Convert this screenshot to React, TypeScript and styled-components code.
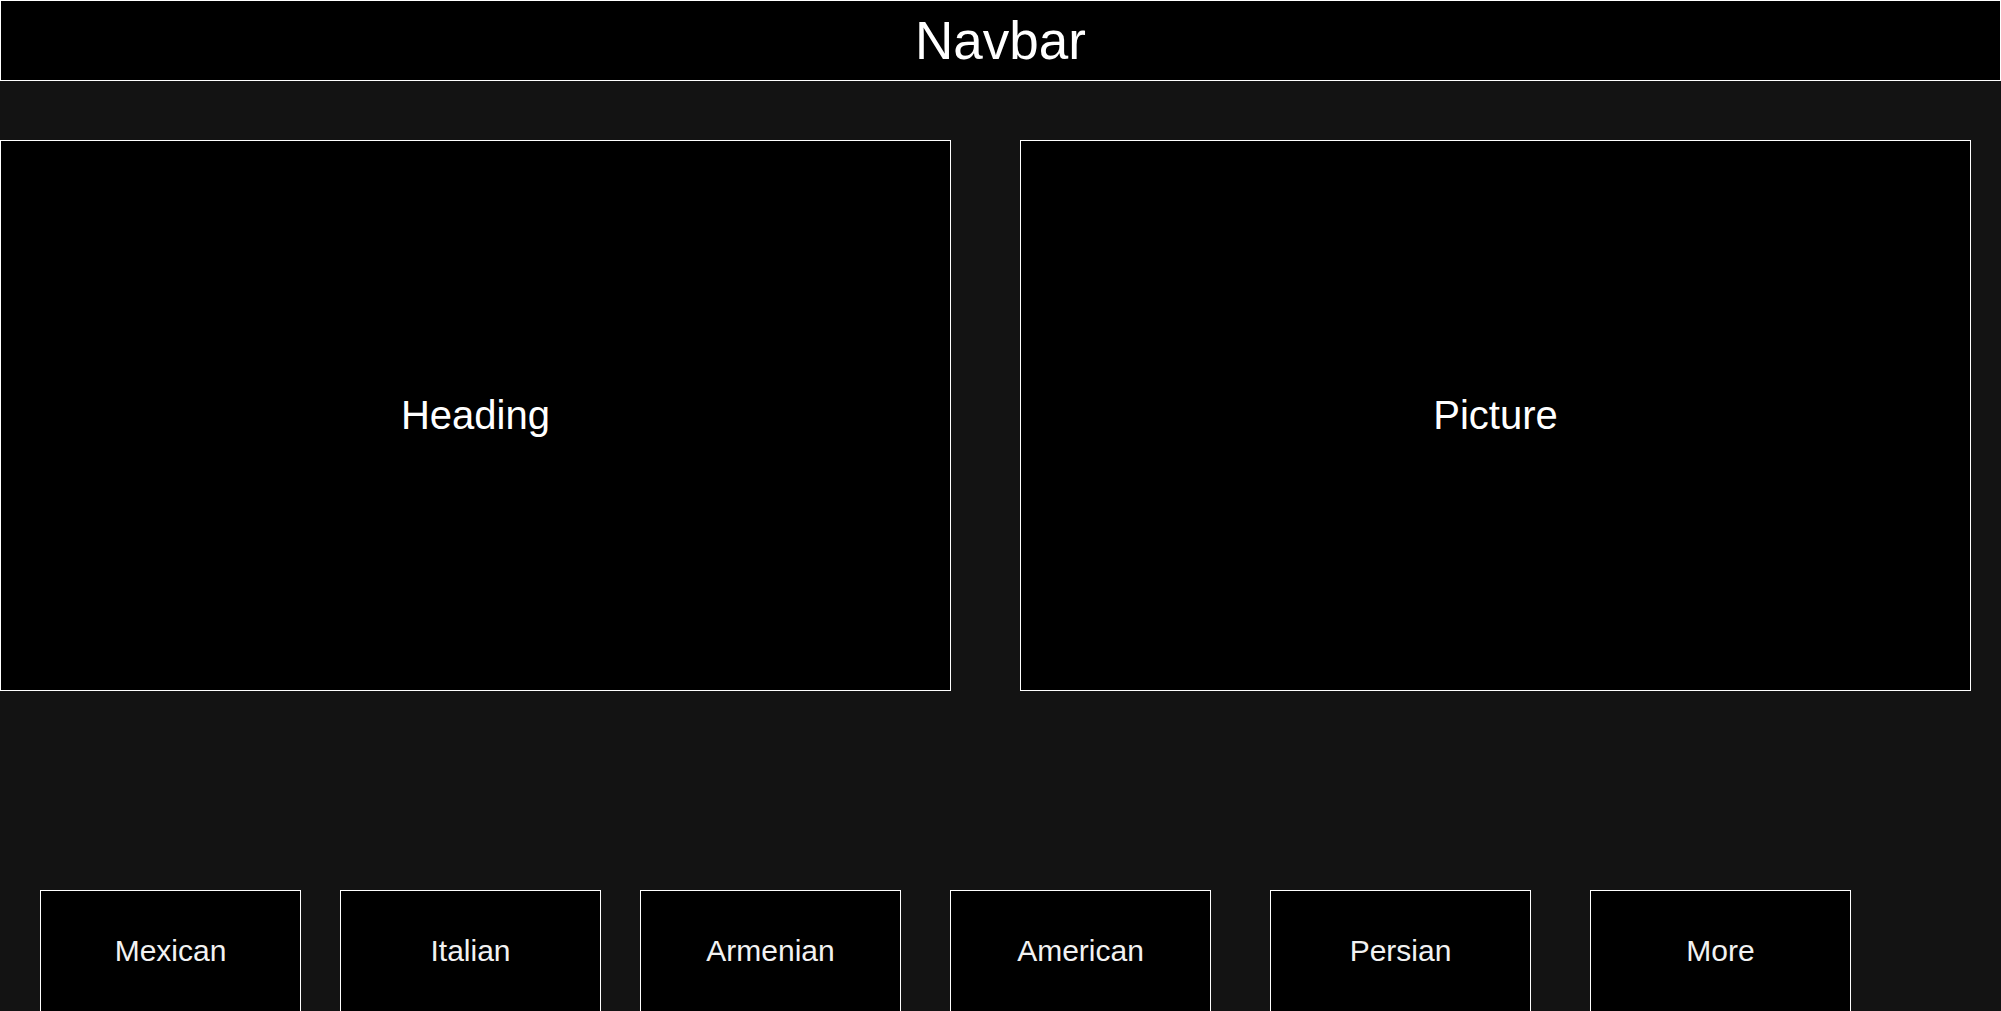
import React from "react";
import styled, { createGlobalStyle } from "styled-components";

const GlobalStyle = createGlobalStyle`
  html, body {
    margin: 0;
    padding: 0;
    background: #131313;
    overflow: hidden;
  }
  body {
    font-family: "Liberation Sans", Arial, sans-serif;
    color: #ffffff;
  }
  * { box-sizing: border-box; }
`;

const Page = styled.div`
  display: flex;
  flex-direction: column;
  width: 2001px;
`;

const Navbar = styled.header`
  height: 81px;
  border: 1px solid #ffffff;
  background: #000000;
  display: flex;
  align-items: center;
  justify-content: center;
  font-size: 53px;
`;

const HeroRow = styled.section`
  display: flex;
  gap: 69px;
  margin-top: 59px;
`;

const Panel = styled.div`
  width: 951px;
  height: 551px;
  border: 1px solid #ffffff;
  background: #000000;
  display: flex;
  align-items: center;
  justify-content: center;
  font-size: 40px;
`;

const CategoryRow = styled.nav`
  display: flex;
  margin-top: 199px;
  padding-left: 40px;
`;

const Category = styled.div<{ $offset: number }>`
  width: 261px;
  height: 122px;
  margin-left: ${(p) => p.$offset}px;
  border: 1px solid #ffffff;
  background: #000000;
  display: flex;
  align-items: center;
  justify-content: center;
  font-size: 30px;
  color: #f2f2f2;
`;

const categories: { name: string; offset: number }[] = [
  { name: "Mexican", offset: 0 },
  { name: "Italian", offset: 39 },
  { name: "Armenian", offset: 39 },
  { name: "American", offset: 49 },
  { name: "Persian", offset: 59 },
  { name: "More", offset: 59 },
];

export default function App() {
  return (
    <>
      <GlobalStyle />
      <Page>
        <Navbar>Navbar</Navbar>
        <HeroRow>
          <Panel>Heading</Panel>
          <Panel>Picture</Panel>
        </HeroRow>
        <CategoryRow>
          {categories.map((c) => (
            <Category key={c.name} $offset={c.offset}>
              {c.name}
            </Category>
          ))}
        </CategoryRow>
      </Page>
    </>
  );
}
